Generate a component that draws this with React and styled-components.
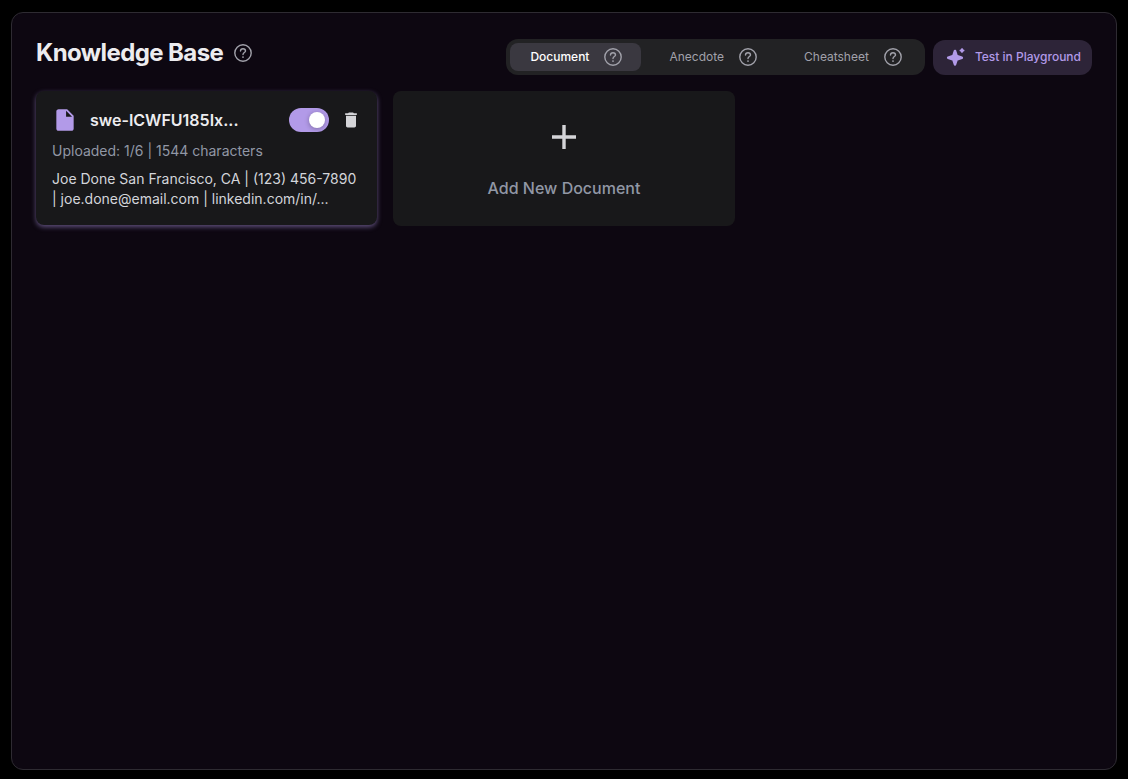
import React, { useState } from 'react';
import styled, { createGlobalStyle } from 'styled-components';
import { MdDelete, MdInsertDriveFile } from 'react-icons/md';

const GlobalStyle = createGlobalStyle`
* {
    box-sizing: border-box;
}
body {
    margin: 0;
    background: #000;
    color: #ececef;
    font-family: Inter, "Liberation Sans", sans-serif;
    -webkit-font-smoothing: antialiased;
}
button {
    font-family: inherit;
    border: none;
    padding: 0;
    cursor: pointer;
}
`;

const Page = styled.div`
min-height: 100vh;
display: flex;
padding: 12px 11px 9px;
`;
const Panel = styled.main`
flex: 1;
min-width: 0;
padding: 26px 24px;
background: #0d0711;
border: 1px solid #2e2b32;
border-radius: 12px;
`;
const Header = styled.header`
display: flex;
align-items: flex-start;
justify-content: space-between;
flex-wrap: wrap;
margin-bottom: 16px;
`;
const TitleRow = styled.div`
display: flex;
align-items: center;
gap: 11px;
color: #a1a1aa;
`;
const Title = styled.h1`
margin: 0;
font-size: 24px;
line-height: 28px;
font-weight: 700;
letter-spacing: -0.025em;
color: #ececef;
`;
const Actions = styled.div`
display: flex;
align-items: flex-end;
gap: 8px;
`;
const Tabs = styled.div`
display: flex;
height: 36px;
padding: 4px;
border-radius: 12px;
background: #222224;
`;
const Tab = styled.button`
display: flex;
align-items: center;
gap: 15px;
padding: 0 19px 0 20px;
border-radius: 8px;
font-size: 12px;
line-height: 16px;
font-weight: ${props => (props.$active ? 500 : 400)};
background: ${props => (props.$active ? '#3a3840' : 'transparent')};
color: ${props => (props.$active ? '#fff' : '#a1a1aa')};
svg {
    color: #a1a1aa;
}
& + & {
    margin-left: 8px;
}
`;
const PlaygroundButton = styled.button`
display: flex;
align-items: center;
gap: 10px;
height: 35px;
padding: 0 11px 1px 12px;
border-radius: 12px;
background: #2d2438;
color: #b29ae8;
font-size: 12px;
line-height: 16px;
font-weight: 500;
`;
const CardGrid = styled.section`
display: grid;
grid-template-columns: repeat(3, minmax(0, 1fr));
grid-auto-rows: minmax(135px, auto);
gap: 16px;
`;
const Card = styled.article`
align-self: start;
padding: 16px;
border-radius: 8px;
background: #18181a;
box-shadow: 0 2px 5px rgba(178, 154, 232, 0.5);
`;
const CardHeader = styled.div`
display: flex;
align-items: center;
height: 26px;
`;
const FileIcon = styled(MdInsertDriveFile)`
flex-shrink: 0;
color: #b29ae8;
font-size: 26px;
`;
const CardTitle = styled.h2`
flex: 1;
min-width: 0;
margin: 0 0 0 12px;
font-size: 16px;
line-height: 24px;
font-weight: 600;
white-space: nowrap;
`;
const Switch = styled.input`
appearance: none;
display: flex;
align-items: center;
width: 40px;
height: 24px;
margin: 0 12px 0 0;
padding: 4px;
border-radius: 12px;
background: ${props => (props.checked ? '#b29ae8' : '#3a3840')};
cursor: pointer;
&::before {
    content: "";
    width: 16px;
    height: 16px;
    margin-left: ${props => (props.checked ? '16px' : '0')};
    border-radius: 50%;
    background: #fff;
    box-shadow: 0 1px 5px rgba(0, 0, 0, 0.3);
}
`;
const DeleteButton = styled.button`
display: flex;
background: none;
color: #d4d4d8;
font-size: 20px;
`;
const Meta = styled.p`
margin: 8px 0;
font-size: 14px;
line-height: 20px;
color: #9197a5;
`;
const Preview = styled.p`
margin: 0;
font-size: 14px;
line-height: 20px;
color: #d3d5da;
`;
const AddCard = styled.button`
display: flex;
flex-direction: column;
align-items: center;
justify-content: flex-end;
gap: 27px;
padding: 24px 16px 26px;
border-radius: 8px;
background: #18181a;
color: #9197a5;
font-size: 16px;
line-height: 24px;
font-weight: 500;
svg {
    color: #d4d4d8;
}
`;

const HelpIcon = () => (
    <svg width="18" height="18" viewBox="0 0 18 18" fill="none" stroke="currentColor" strokeWidth="1.4" strokeLinecap="round" aria-hidden="true">
        <circle cx="9" cy="9" r="8.2" />
        <path d="M6.5 7.1C6.5 5.6 7.6 4.7 9 4.7s2.5.9 2.5 2.2C11.5 8.5 9 8.6 9 10.6" />
        <circle cx="9" cy="13.1" r="0.9" fill="currentColor" stroke="none" />
    </svg>
);

const SparkleIcon = () => (
    <svg width="20" height="20" viewBox="0 0 20 20" fill="currentColor" stroke="currentColor" strokeLinejoin="round" aria-hidden="true">
        <path strokeWidth="2.6" d="M10 4L11.6 8.9L16.8 10.7L11.6 12.5L10 17.4L8.4 12.5L3.2 10.7L8.4 8.9Z" />
        <path strokeWidth="1.4" d="M17 1.7L17.6 2.9L18.8 3.5L17.6 4.1L17 5.3L16.4 4.1L15.2 3.5L16.4 2.9Z" />
    </svg>
);

const PlusIcon = () => (
    <svg width="24" height="24" viewBox="0 0 24 24" fill="none" stroke="currentColor" strokeWidth="3.4" aria-hidden="true">
        <path d="M12 0v24M0 12h24" />
    </svg>
);

const tabs = ['Document', 'Anecdote', 'Cheatsheet'];

const App = () => {
    const [activeTab, setActiveTab] = useState('Document');
    const [enabled, setEnabled] = useState(true);

    return (
        <Page>
            <GlobalStyle />
            <Panel>
                <Header>
                    <TitleRow>
                        <Title>Knowledge Base</Title>
                        <HelpIcon />
                    </TitleRow>
                    <Actions>
                        <Tabs role="tablist">
                            {tabs.map(tab => (
                                <Tab
                                    key={tab}
                                    role="tab"
                                    aria-selected={tab === activeTab}
                                    $active={tab === activeTab}
                                    onClick={() => setActiveTab(tab)}
                                >
                                    {tab}
                                    <HelpIcon />
                                </Tab>
                            ))}
                        </Tabs>
                        <PlaygroundButton>
                            <SparkleIcon />
                            Test in Playground
                        </PlaygroundButton>
                    </Actions>
                </Header>
                <CardGrid>
                    <Card>
                        <CardHeader>
                            <FileIcon />
                            <CardTitle>swe-ICWFU185Ix...</CardTitle>
                            <Switch
                                type="checkbox"
                                role="switch"
                                aria-label="Use this document"
                                checked={enabled}
                                onChange={() => setEnabled(!enabled)}
                            />
                            <DeleteButton aria-label="Delete document">
                                <MdDelete />
                            </DeleteButton>
                        </CardHeader>
                        <Meta>Uploaded: 1/6 | 1544 characters</Meta>
                        <Preview>Joe Done San Francisco, CA | (123) 456-7890 | joe.done@email.com | linkedin.com/in/...</Preview>
                    </Card>
                    <AddCard>
                        <PlusIcon />
                        Add New Document
                    </AddCard>
                </CardGrid>
            </Panel>
        </Page>
    );
};

export default App;
